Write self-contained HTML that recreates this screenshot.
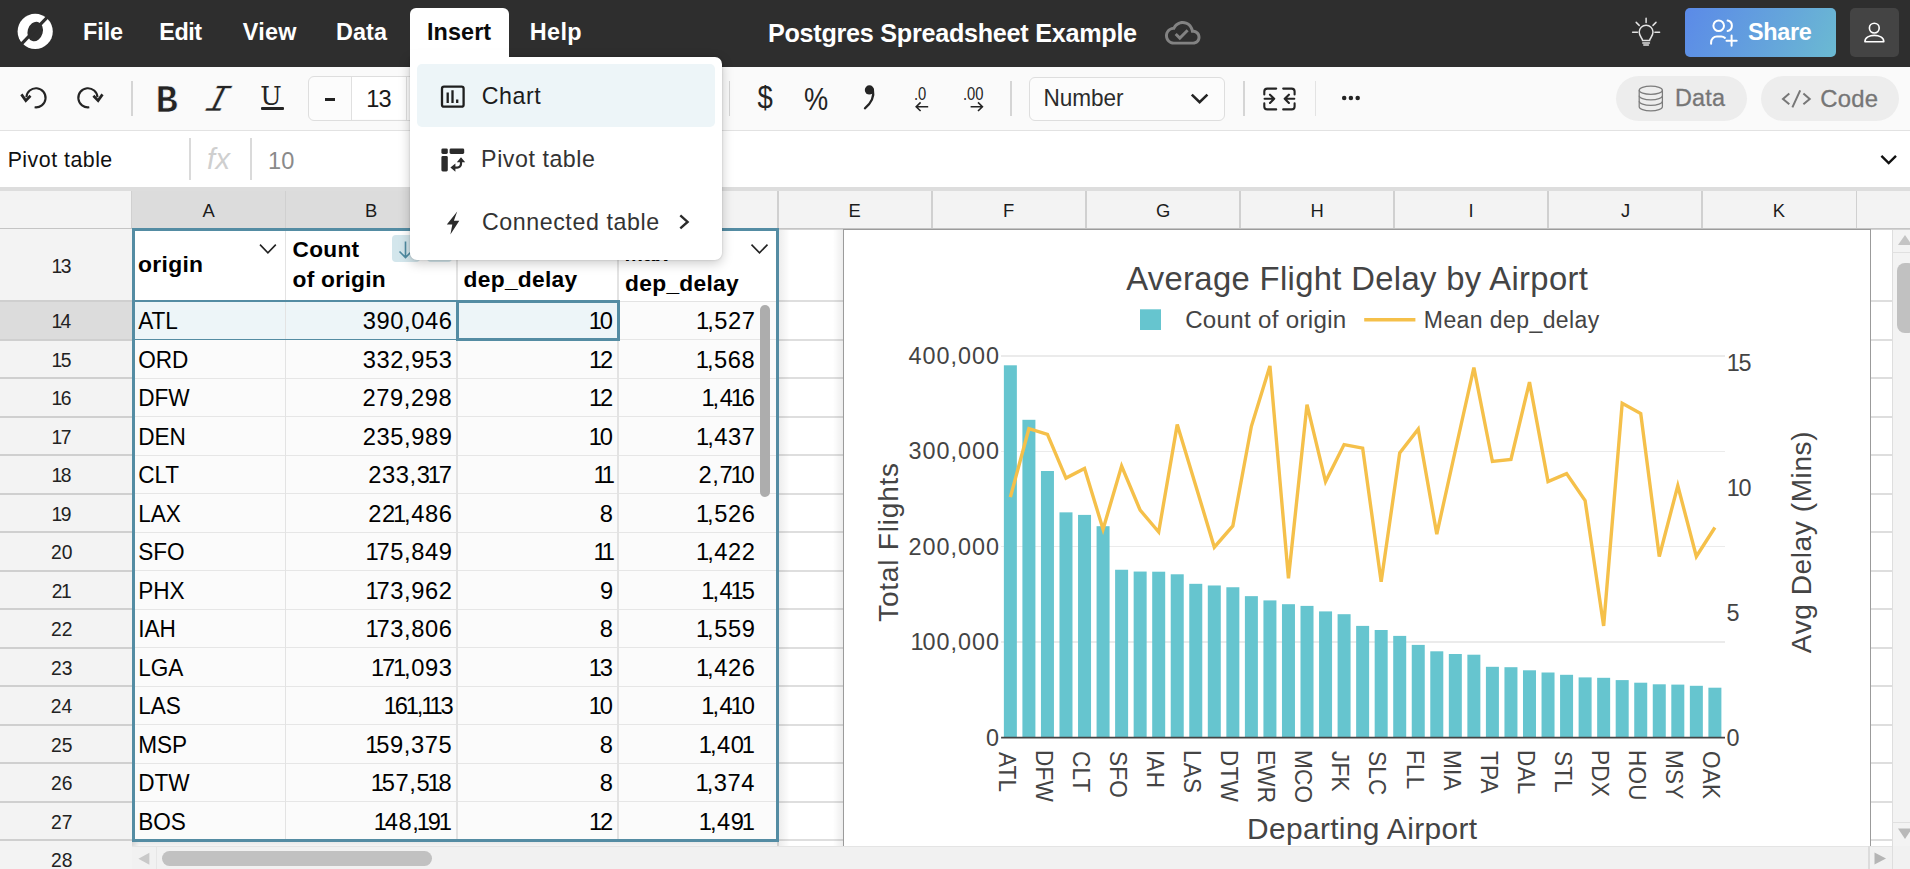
<!DOCTYPE html>
<html lang="en">
<head>
<meta charset="utf-8">
<title>Postgres Spreadsheet Example</title>
<style>
html,body{margin:0;padding:0;}
body{width:1910px;height:869px;overflow:hidden;position:relative;background:#fff;
 font-family:"Liberation Sans",Arial,sans-serif;color:#000;-webkit-font-smoothing:antialiased;}
div,span,svg{position:absolute;box-sizing:border-box;}
.t{line-height:1;white-space:pre;}
.t i{font-style:normal;}
svg{overflow:visible;}
#grid{left:0;top:187px;width:1910px;height:682px;overflow:hidden;background:#fff;}
#topbar{left:0;top:0;width:1910px;height:67px;background:#2e2e2e;}
#toolbar{left:0;top:67px;width:1910px;height:64px;background:#fafafa;border-bottom:1.5px solid #e2e2e2;}
#formula{left:0;top:131px;width:1910px;height:56px;background:#fff;}
.sep{width:1.5px;background:#d6d6d6;}
</style>
</head>
<body>
<div id="gridwrap" style="left:0;top:0;width:1910px;height:869px;">
<div style="left:0px;top:187px;width:1910px;height:682px;background:#fff;"></div>
<div style="left:131.5px;top:300.4px;width:1778.5px;height:1.8px;background:#dedede;"></div>
<div style="left:131.5px;top:338.89px;width:1778.5px;height:1.8px;background:#dedede;"></div>
<div style="left:131.5px;top:377.38px;width:1778.5px;height:1.8px;background:#dedede;"></div>
<div style="left:131.5px;top:415.87px;width:1778.5px;height:1.8px;background:#dedede;"></div>
<div style="left:131.5px;top:454.36px;width:1778.5px;height:1.8px;background:#dedede;"></div>
<div style="left:131.5px;top:492.85px;width:1778.5px;height:1.8px;background:#dedede;"></div>
<div style="left:131.5px;top:531.34px;width:1778.5px;height:1.8px;background:#dedede;"></div>
<div style="left:131.5px;top:569.83px;width:1778.5px;height:1.8px;background:#dedede;"></div>
<div style="left:131.5px;top:608.32px;width:1778.5px;height:1.8px;background:#dedede;"></div>
<div style="left:131.5px;top:646.81px;width:1778.5px;height:1.8px;background:#dedede;"></div>
<div style="left:131.5px;top:685.3px;width:1778.5px;height:1.8px;background:#dedede;"></div>
<div style="left:131.5px;top:723.79px;width:1778.5px;height:1.8px;background:#dedede;"></div>
<div style="left:131.5px;top:762.28px;width:1778.5px;height:1.8px;background:#dedede;"></div>
<div style="left:131.5px;top:800.77px;width:1778.5px;height:1.8px;background:#dedede;"></div>
<div style="left:131.5px;top:839.26px;width:1778.5px;height:1.8px;background:#dedede;"></div>
<div style="left:131.5px;top:877.75px;width:1778.5px;height:1.8px;background:#dedede;"></div>
<div style="left:777.1px;top:228.5px;width:1.8px;height:640.5px;background:#dedede;"></div>
<div style="left:931.1px;top:228.5px;width:1.8px;height:640.5px;background:#dedede;"></div>
<div style="left:1085.1px;top:228.5px;width:1.8px;height:640.5px;background:#dedede;"></div>
<div style="left:1239.1px;top:228.5px;width:1.8px;height:640.5px;background:#dedede;"></div>
<div style="left:1393.1px;top:228.5px;width:1.8px;height:640.5px;background:#dedede;"></div>
<div style="left:1547.1px;top:228.5px;width:1.8px;height:640.5px;background:#dedede;"></div>
<div style="left:1701.1px;top:228.5px;width:1.8px;height:640.5px;background:#dedede;"></div>
<div style="left:1855.8999999999999px;top:228.5px;width:1.8px;height:640.5px;background:#dedede;"></div>
<div style="left:0px;top:187px;width:1910px;height:4.2px;background:#dddddd;"></div>
<div style="left:0px;top:191.2px;width:1910px;height:37.3px;background:#f3f3f3;"></div>
<div style="left:131.5px;top:191.2px;width:486.5px;height:37.3px;background:#dcdcdc;"></div>
<div style="left:130.8px;top:191.2px;width:1.4px;height:37.3px;background:#d0d0d0;"></div>
<div style="left:285.1px;top:191.2px;width:1.4px;height:37.3px;background:#d0d0d0;"></div>
<div style="left:456.3px;top:191.2px;width:1.4px;height:37.3px;background:#d0d0d0;"></div>
<div style="left:617.3px;top:191.2px;width:1.4px;height:37.3px;background:#d0d0d0;"></div>
<div style="left:777.3px;top:191.2px;width:1.4px;height:37.3px;background:#d0d0d0;"></div>
<div style="left:931.3px;top:191.2px;width:1.4px;height:37.3px;background:#d0d0d0;"></div>
<div style="left:1085.3px;top:191.2px;width:1.4px;height:37.3px;background:#d0d0d0;"></div>
<div style="left:1239.3px;top:191.2px;width:1.4px;height:37.3px;background:#d0d0d0;"></div>
<div style="left:1393.3px;top:191.2px;width:1.4px;height:37.3px;background:#d0d0d0;"></div>
<div style="left:1547.3px;top:191.2px;width:1.4px;height:37.3px;background:#d0d0d0;"></div>
<div style="left:1701.3px;top:191.2px;width:1.4px;height:37.3px;background:#d0d0d0;"></div>
<div style="left:1856.1px;top:191.2px;width:1.4px;height:37.3px;background:#d0d0d0;"></div>
<span class="t" style="left:202.53px;top:202.32px;font-size:18.4px;color:#1c1c1c;">A</span>
<span class="t" style="left:365.02px;top:202.32px;font-size:18.4px;color:#1c1c1c;">B</span>
<span class="t" style="left:530.81px;top:202.32px;font-size:18.4px;color:#1c1c1c;">C</span>
<span class="t" style="left:691.06px;top:202.32px;font-size:18.4px;color:#1c1c1c;">D</span>
<span class="t" style="left:848.50px;top:202.32px;font-size:18.4px;color:#1c1c1c;">E</span>
<span class="t" style="left:1003.00px;top:202.32px;font-size:18.4px;color:#1c1c1c;">F</span>
<span class="t" style="left:1156.12px;top:202.32px;font-size:18.4px;color:#1c1c1c;">G</span>
<span class="t" style="left:1310.38px;top:202.32px;font-size:18.4px;color:#1c1c1c;">H</span>
<span class="t" style="left:1468.50px;top:202.32px;font-size:18.4px;color:#1c1c1c;">I</span>
<span class="t" style="left:1620.94px;top:202.32px;font-size:18.4px;color:#1c1c1c;">J</span>
<span class="t" style="left:1772.65px;top:202.32px;font-size:18.4px;color:#1c1c1c;">K</span>
<div style="left:0px;top:227.5px;width:1910px;height:2.5px;background:linear-gradient(#bdbdbd,#d9d9d9);"></div>
<div style="left:0px;top:228.5px;width:131.5px;height:640.5px;background:#f3f3f3;"></div>
<div style="left:0px;top:301.3px;width:131.5px;height:38.49px;background:#dcdcdc;"></div>
<div style="left:0px;top:300.3px;width:131.5px;height:2.0px;background:#cfcfcf;"></div>
<div style="left:0px;top:338.79px;width:131.5px;height:2.0px;background:#cfcfcf;"></div>
<div style="left:0px;top:377.28px;width:131.5px;height:2.0px;background:#cfcfcf;"></div>
<div style="left:0px;top:415.77px;width:131.5px;height:2.0px;background:#cfcfcf;"></div>
<div style="left:0px;top:454.26px;width:131.5px;height:2.0px;background:#cfcfcf;"></div>
<div style="left:0px;top:492.75px;width:131.5px;height:2.0px;background:#cfcfcf;"></div>
<div style="left:0px;top:531.24px;width:131.5px;height:2.0px;background:#cfcfcf;"></div>
<div style="left:0px;top:569.73px;width:131.5px;height:2.0px;background:#cfcfcf;"></div>
<div style="left:0px;top:608.22px;width:131.5px;height:2.0px;background:#cfcfcf;"></div>
<div style="left:0px;top:646.71px;width:131.5px;height:2.0px;background:#cfcfcf;"></div>
<div style="left:0px;top:685.2px;width:131.5px;height:2.0px;background:#cfcfcf;"></div>
<div style="left:0px;top:723.69px;width:131.5px;height:2.0px;background:#cfcfcf;"></div>
<div style="left:0px;top:762.18px;width:131.5px;height:2.0px;background:#cfcfcf;"></div>
<div style="left:0px;top:800.67px;width:131.5px;height:2.0px;background:#cfcfcf;"></div>
<div style="left:0px;top:839.16px;width:131.5px;height:2.0px;background:#cfcfcf;"></div>
<div style="left:0px;top:877.65px;width:131.5px;height:2.0px;background:#cfcfcf;"></div>
<span class="t" style="left:53.14px;top:256.86px;font-size:19.3px;color:#222;"><i style="margin:0 -1.6px">1</i>3</span>
<span class="t" style="left:53.01px;top:312.46px;font-size:19.3px;color:#222;"><i style="margin:0 -1.6px">1</i>4</span>
<span class="t" style="left:53.14px;top:350.95px;font-size:19.3px;color:#222;"><i style="margin:0 -1.6px">1</i>5</span>
<span class="t" style="left:53.14px;top:389.44px;font-size:19.3px;color:#222;"><i style="margin:0 -1.6px">1</i>6</span>
<span class="t" style="left:53.20px;top:427.93px;font-size:19.3px;color:#222;"><i style="margin:0 -1.6px">1</i>7</span>
<span class="t" style="left:53.14px;top:466.42px;font-size:19.3px;color:#222;"><i style="margin:0 -1.6px">1</i>8</span>
<span class="t" style="left:53.20px;top:504.91px;font-size:19.3px;color:#222;"><i style="margin:0 -1.6px">1</i>9</span>
<span class="t" style="left:50.92px;top:543.40px;font-size:19.3px;color:#222;">20</span>
<span class="t" style="left:51.85px;top:581.89px;font-size:19.3px;color:#222;">2<i style="margin:0 -1.6px">1</i></span>
<span class="t" style="left:51.05px;top:620.38px;font-size:19.3px;color:#222;">22</span>
<span class="t" style="left:50.99px;top:658.87px;font-size:19.3px;color:#222;">23</span>
<span class="t" style="left:50.86px;top:697.36px;font-size:19.3px;color:#222;">24</span>
<span class="t" style="left:50.99px;top:735.85px;font-size:19.3px;color:#222;">25</span>
<span class="t" style="left:50.99px;top:774.34px;font-size:19.3px;color:#222;">26</span>
<span class="t" style="left:51.05px;top:812.83px;font-size:19.3px;color:#222;">27</span>
<span class="t" style="left:50.99px;top:851.32px;font-size:19.3px;color:#222;">28</span>
<div style="left:131.5px;top:228.5px;width:7.5px;height:640.5px;background:linear-gradient(90deg,rgba(0,0,0,.10),rgba(0,0,0,0));"></div>
<div style="left:131.5px;top:228px;width:647.7px;height:613.5px;background:#fbfbfb;"></div>
<div style="left:131.5px;top:228px;width:647.7px;height:73.3px;background:#fff;"></div>
<div style="left:131.5px;top:301.3px;width:487.5px;height:38.49px;background:#edf5f8;"></div>
<div style="left:131.5px;top:339.19px;width:647.7px;height:1.2px;background:#e6e6e6;"></div>
<div style="left:131.5px;top:377.68px;width:647.7px;height:1.2px;background:#e6e6e6;"></div>
<div style="left:131.5px;top:416.17px;width:647.7px;height:1.2px;background:#e6e6e6;"></div>
<div style="left:131.5px;top:454.66px;width:647.7px;height:1.2px;background:#e6e6e6;"></div>
<div style="left:131.5px;top:493.15px;width:647.7px;height:1.2px;background:#e6e6e6;"></div>
<div style="left:131.5px;top:531.64px;width:647.7px;height:1.2px;background:#e6e6e6;"></div>
<div style="left:131.5px;top:570.13px;width:647.7px;height:1.2px;background:#e6e6e6;"></div>
<div style="left:131.5px;top:608.62px;width:647.7px;height:1.2px;background:#e6e6e6;"></div>
<div style="left:131.5px;top:647.11px;width:647.7px;height:1.2px;background:#e6e6e6;"></div>
<div style="left:131.5px;top:685.6px;width:647.7px;height:1.2px;background:#e6e6e6;"></div>
<div style="left:131.5px;top:724.09px;width:647.7px;height:1.2px;background:#e6e6e6;"></div>
<div style="left:131.5px;top:762.58px;width:647.7px;height:1.2px;background:#e6e6e6;"></div>
<div style="left:131.5px;top:801.07px;width:647.7px;height:1.2px;background:#e6e6e6;"></div>
<div style="left:285.2px;top:228px;width:1.2px;height:613.5px;background:#e3e3e3;"></div>
<div style="left:456.4px;top:228px;width:1.2px;height:613.5px;background:#e3e3e3;"></div>
<div style="left:617.4px;top:228px;width:1.2px;height:613.5px;background:#e3e3e3;"></div>
<div style="left:131.5px;top:300.7px;width:647.7px;height:1.2px;background:#e3e3e3;"></div>
<div style="left:131.5px;top:300.1px;width:487.5px;height:1.8px;background:#548ca3;"></div>
<div style="left:131.5px;top:338.79px;width:487.5px;height:1.6px;background:#548ca3;"></div>
<div style="left:456px;top:299.9px;width:163.9px;height:40.8px;border:3.5px solid #548ca3;"></div>
<div style="left:131.5px;top:228px;width:647.7px;height:613.5px;border:3.2px solid #548ca3;"></div>
<div style="left:760.3px;top:304.9px;width:9.5px;height:192.1px;background:#adadad;border-radius:5px;"></div>
<div style="left:779.2px;top:229.5px;width:10.8px;height:616.5px;background:linear-gradient(90deg,rgba(0,0,0,.07),rgba(0,0,0,0));"></div>
<div style="left:833px;top:229.5px;width:10px;height:616.5px;background:linear-gradient(270deg,rgba(0,0,0,.07),rgba(0,0,0,0));"></div>
<div style="left:131.5px;top:841.5px;width:647.7px;height:5.0px;background:linear-gradient(180deg,rgba(0,0,0,.085),rgba(0,0,0,.03));"></div>
<span class="t" style="left:138.12px;top:252.62px;font-size:22.89px;letter-spacing:0.290px;font-weight:700;">origin</span>
<span class="t" style="left:292.52px;top:239.34px;font-size:22.64px;letter-spacing:0.294px;font-weight:700;">Count</span>
<span class="t" style="left:292.52px;top:267.64px;font-size:22.75px;letter-spacing:0.269px;font-weight:700;">of origin</span>
<span class="t" style="left:463.00px;top:239.62px;font-size:22.3px;font-weight:700;">Mean</span>
<span class="t" style="left:463.62px;top:267.63px;font-size:22.76px;letter-spacing:0.281px;font-weight:700;">dep_delay</span>
<span class="t" style="left:624.50px;top:243.22px;font-size:22.3px;font-weight:700;">Max</span>
<span class="t" style="left:625.12px;top:271.53px;font-size:22.76px;letter-spacing:0.281px;font-weight:700;">dep_delay</span>
<div style="left:392.2px;top:235px;width:27.8px;height:27.4px;background:#d3e6ec;border-radius:4px;"></div>
<div style="left:427px;top:235px;width:25px;height:27.4px;background:#d3e6ec;border-radius:4px;"></div>
<svg style="left:392px;top:235px;width:28px;height:28px" viewBox="0 0 28 28"><path d="M13.5 6.5V22.5M7.5 16.5L13.5 22.5L19.5 16.5" fill="none" stroke="#4f8ba1" stroke-width="1.6"/></svg>
<svg style="left:0;top:0;width:1px;height:1px"><path d="M260 244.6L267.9 252.8L275.8 244.6" fill="none" stroke="#222" stroke-width="1.6"/></svg>
<svg style="left:0;top:0;width:1px;height:1px"><path d="M751.5 244.6L759.5 252.8L767.5 244.6" fill="none" stroke="#222" stroke-width="1.6"/></svg>
<span class="t" style="left:138.30px;top:311.37px;font-size:22.6px;letter-spacing:-0.100px;transform:scaleY(1.05);transform-origin:0 84.65%;">ATL</span>
<span class="t" style="left:362.65px;top:310.44px;font-size:23.7px;letter-spacing:0.600px;">390,046</span>
<span class="t" style="left:591.40px;top:310.44px;font-size:23.7px;letter-spacing:0.600px;"><i style="margin:0 -2.75px">1</i>0</span>
<span class="t" style="left:698.85px;top:310.44px;font-size:23.7px;letter-spacing:0.600px;"><i style="margin:0 -2.75px">1</i>,527</span>
<span class="t" style="left:138.30px;top:349.86px;font-size:22.6px;letter-spacing:-0.100px;transform:scaleY(1.05);transform-origin:0 84.65%;">ORD</span>
<span class="t" style="left:362.65px;top:348.93px;font-size:23.7px;letter-spacing:0.600px;">332,953</span>
<span class="t" style="left:591.65px;top:348.93px;font-size:23.7px;letter-spacing:0.600px;"><i style="margin:0 -2.75px">1</i>2</span>
<span class="t" style="left:698.60px;top:348.93px;font-size:23.7px;letter-spacing:0.600px;"><i style="margin:0 -2.75px">1</i>,568</span>
<span class="t" style="left:138.30px;top:388.35px;font-size:22.6px;letter-spacing:-0.100px;transform:scaleY(1.05);transform-origin:0 84.65%;">DFW</span>
<span class="t" style="left:362.52px;top:387.42px;font-size:23.7px;letter-spacing:0.600px;">279,298</span>
<span class="t" style="left:591.65px;top:387.42px;font-size:23.7px;letter-spacing:0.600px;"><i style="margin:0 -2.75px">1</i>2</span>
<span class="t" style="left:704.23px;top:387.42px;font-size:23.7px;letter-spacing:0.600px;"><i style="margin:0 -2.75px">1</i>,4<i style="margin:0 -2.75px">1</i>6</span>
<span class="t" style="left:138.30px;top:426.84px;font-size:22.6px;letter-spacing:-0.100px;transform:scaleY(1.05);transform-origin:0 84.65%;">DEN</span>
<span class="t" style="left:362.65px;top:425.91px;font-size:23.7px;letter-spacing:0.600px;">235,989</span>
<span class="t" style="left:591.40px;top:425.91px;font-size:23.7px;letter-spacing:0.600px;"><i style="margin:0 -2.75px">1</i>0</span>
<span class="t" style="left:698.85px;top:425.91px;font-size:23.7px;letter-spacing:0.600px;"><i style="margin:0 -2.75px">1</i>,437</span>
<span class="t" style="left:138.30px;top:465.33px;font-size:22.6px;letter-spacing:-0.100px;transform:scaleY(1.05);transform-origin:0 84.65%;">CLT</span>
<span class="t" style="left:368.27px;top:464.40px;font-size:23.7px;letter-spacing:0.600px;">233,3<i style="margin:0 -2.75px">1</i>7</span>
<span class="t" style="left:596.15px;top:464.40px;font-size:23.7px;letter-spacing:0.600px;"><i style="margin:0 -2.75px">1</i><i style="margin:0 -2.75px">1</i></span>
<span class="t" style="left:698.60px;top:464.40px;font-size:23.7px;letter-spacing:0.600px;">2,7<i style="margin:0 -2.75px">1</i>0</span>
<span class="t" style="left:138.30px;top:503.82px;font-size:22.6px;letter-spacing:-0.100px;transform:scaleY(1.05);transform-origin:0 84.65%;">LAX</span>
<span class="t" style="left:368.15px;top:502.89px;font-size:23.7px;letter-spacing:0.600px;">22<i style="margin:0 -2.75px">1</i>,486</span>
<span class="t" style="left:599.75px;top:502.89px;font-size:23.7px;letter-spacing:0.600px;">8</span>
<span class="t" style="left:698.73px;top:502.89px;font-size:23.7px;letter-spacing:0.600px;"><i style="margin:0 -2.75px">1</i>,526</span>
<span class="t" style="left:138.30px;top:542.31px;font-size:22.6px;letter-spacing:-0.100px;transform:scaleY(1.05);transform-origin:0 84.65%;">SFO</span>
<span class="t" style="left:368.15px;top:541.38px;font-size:23.7px;letter-spacing:0.600px;"><i style="margin:0 -2.75px">1</i>75,849</span>
<span class="t" style="left:596.15px;top:541.38px;font-size:23.7px;letter-spacing:0.600px;"><i style="margin:0 -2.75px">1</i><i style="margin:0 -2.75px">1</i></span>
<span class="t" style="left:698.85px;top:541.38px;font-size:23.7px;letter-spacing:0.600px;"><i style="margin:0 -2.75px">1</i>,422</span>
<span class="t" style="left:138.30px;top:580.80px;font-size:22.6px;letter-spacing:-0.100px;transform:scaleY(1.05);transform-origin:0 84.65%;">PHX</span>
<span class="t" style="left:368.27px;top:579.87px;font-size:23.7px;letter-spacing:0.600px;"><i style="margin:0 -2.75px">1</i>73,962</span>
<span class="t" style="left:599.88px;top:579.87px;font-size:23.7px;letter-spacing:0.600px;">9</span>
<span class="t" style="left:704.10px;top:579.87px;font-size:23.7px;letter-spacing:0.600px;"><i style="margin:0 -2.75px">1</i>,4<i style="margin:0 -2.75px">1</i>5</span>
<span class="t" style="left:138.30px;top:619.29px;font-size:22.6px;letter-spacing:-0.100px;transform:scaleY(1.05);transform-origin:0 84.65%;">IAH</span>
<span class="t" style="left:368.15px;top:618.36px;font-size:23.7px;letter-spacing:0.600px;"><i style="margin:0 -2.75px">1</i>73,806</span>
<span class="t" style="left:599.75px;top:618.36px;font-size:23.7px;letter-spacing:0.600px;">8</span>
<span class="t" style="left:698.73px;top:618.36px;font-size:23.7px;letter-spacing:0.600px;"><i style="margin:0 -2.75px">1</i>,559</span>
<span class="t" style="left:138.30px;top:657.78px;font-size:22.6px;letter-spacing:-0.100px;transform:scaleY(1.05);transform-origin:0 84.65%;">LGA</span>
<span class="t" style="left:373.65px;top:656.85px;font-size:23.7px;letter-spacing:0.600px;"><i style="margin:0 -2.75px">1</i>7<i style="margin:0 -2.75px">1</i>,093</span>
<span class="t" style="left:591.52px;top:656.85px;font-size:23.7px;letter-spacing:0.600px;"><i style="margin:0 -2.75px">1</i>3</span>
<span class="t" style="left:698.73px;top:656.85px;font-size:23.7px;letter-spacing:0.600px;"><i style="margin:0 -2.75px">1</i>,426</span>
<span class="t" style="left:138.30px;top:696.27px;font-size:22.6px;letter-spacing:-0.100px;transform:scaleY(1.05);transform-origin:0 84.65%;">LAS</span>
<span class="t" style="left:386.40px;top:695.34px;font-size:23.7px;letter-spacing:0.600px;"><i style="margin:0 -2.75px">1</i>6<i style="margin:0 -2.75px">1</i>,<i style="margin:0 -2.75px">1</i><i style="margin:0 -2.75px">1</i>3</span>
<span class="t" style="left:591.40px;top:695.34px;font-size:23.7px;letter-spacing:0.600px;"><i style="margin:0 -2.75px">1</i>0</span>
<span class="t" style="left:704.10px;top:695.34px;font-size:23.7px;letter-spacing:0.600px;"><i style="margin:0 -2.75px">1</i>,4<i style="margin:0 -2.75px">1</i>0</span>
<span class="t" style="left:138.30px;top:734.76px;font-size:22.6px;letter-spacing:-0.100px;transform:scaleY(1.05);transform-origin:0 84.65%;">MSP</span>
<span class="t" style="left:368.02px;top:733.83px;font-size:23.7px;letter-spacing:0.600px;"><i style="margin:0 -2.75px">1</i>59,375</span>
<span class="t" style="left:599.75px;top:733.83px;font-size:23.7px;letter-spacing:0.600px;">8</span>
<span class="t" style="left:701.60px;top:733.83px;font-size:23.7px;letter-spacing:0.600px;"><i style="margin:0 -2.75px">1</i>,40<i style="margin:0 -2.75px">1</i></span>
<span class="t" style="left:138.30px;top:773.25px;font-size:22.6px;letter-spacing:-0.100px;transform:scaleY(1.05);transform-origin:0 84.65%;">DTW</span>
<span class="t" style="left:373.52px;top:772.32px;font-size:23.7px;letter-spacing:0.600px;"><i style="margin:0 -2.75px">1</i>57,5<i style="margin:0 -2.75px">1</i>8</span>
<span class="t" style="left:599.75px;top:772.32px;font-size:23.7px;letter-spacing:0.600px;">8</span>
<span class="t" style="left:698.35px;top:772.32px;font-size:23.7px;letter-spacing:0.600px;"><i style="margin:0 -2.75px">1</i>,374</span>
<span class="t" style="left:138.30px;top:811.74px;font-size:22.6px;letter-spacing:-0.100px;transform:scaleY(1.05);transform-origin:0 84.65%;">BOS</span>
<span class="t" style="left:376.52px;top:810.81px;font-size:23.7px;letter-spacing:0.600px;"><i style="margin:0 -2.75px">1</i>48,<i style="margin:0 -2.75px">1</i>9<i style="margin:0 -2.75px">1</i></span>
<span class="t" style="left:591.65px;top:810.81px;font-size:23.7px;letter-spacing:0.600px;"><i style="margin:0 -2.75px">1</i>2</span>
<span class="t" style="left:701.60px;top:810.81px;font-size:23.7px;letter-spacing:0.600px;"><i style="margin:0 -2.75px">1</i>,49<i style="margin:0 -2.75px">1</i></span>
<div style="left:843px;top:229px;width:1027.6px;height:640px;background:#fff;border:1.6px solid #9b9b9b;border-bottom:none;"></div>
<div style="left:1001.1px;top:641.4px;width:723.86px;height:1.5px;background:#ebebeb;"></div>
<div style="left:1001.1px;top:545.95px;width:723.86px;height:1.5px;background:#ebebeb;"></div>
<div style="left:1001.1px;top:450.5px;width:723.86px;height:1.5px;background:#ebebeb;"></div>
<div style="left:1001.1px;top:355.05px;width:723.86px;height:1.5px;background:#ebebeb;"></div>
<svg id="chart" style="left:0;top:0;width:1910px;height:869px" viewBox="0 0 1910 869">
<g fill="#66c5cf">
<rect x="1003.87" y="365.30" width="13" height="372.30"/>
<rect x="1022.41" y="419.80" width="13" height="317.80"/>
<rect x="1040.95" y="471.01" width="13" height="266.59"/>
<rect x="1059.49" y="512.35" width="13" height="225.25"/>
<rect x="1078.03" y="514.90" width="13" height="222.70"/>
<rect x="1096.57" y="526.19" width="13" height="211.41"/>
<rect x="1115.11" y="569.75" width="13" height="167.85"/>
<rect x="1133.65" y="571.55" width="13" height="166.05"/>
<rect x="1152.19" y="571.70" width="13" height="165.90"/>
<rect x="1170.73" y="574.29" width="13" height="163.31"/>
<rect x="1189.27" y="583.82" width="13" height="153.78"/>
<rect x="1207.81" y="585.48" width="13" height="152.12"/>
<rect x="1226.35" y="587.25" width="13" height="150.35"/>
<rect x="1244.89" y="596.15" width="13" height="141.45"/>
<rect x="1263.43" y="600.40" width="13" height="137.20"/>
<rect x="1281.97" y="604.20" width="13" height="133.40"/>
<rect x="1300.51" y="605.90" width="13" height="131.70"/>
<rect x="1319.05" y="611.40" width="13" height="126.20"/>
<rect x="1337.59" y="614.20" width="13" height="123.40"/>
<rect x="1356.13" y="625.90" width="13" height="111.70"/>
<rect x="1374.67" y="630.00" width="13" height="107.60"/>
<rect x="1393.21" y="635.90" width="13" height="101.70"/>
<rect x="1411.75" y="644.90" width="13" height="92.70"/>
<rect x="1430.29" y="651.30" width="13" height="86.30"/>
<rect x="1448.83" y="654.00" width="13" height="83.60"/>
<rect x="1467.37" y="654.70" width="13" height="82.90"/>
<rect x="1485.91" y="666.80" width="13" height="70.80"/>
<rect x="1504.45" y="667.20" width="13" height="70.40"/>
<rect x="1522.99" y="670.30" width="13" height="67.30"/>
<rect x="1541.53" y="672.50" width="13" height="65.10"/>
<rect x="1560.07" y="674.80" width="13" height="62.80"/>
<rect x="1578.61" y="677.40" width="13" height="60.20"/>
<rect x="1597.15" y="677.80" width="13" height="59.80"/>
<rect x="1615.69" y="680.10" width="13" height="57.50"/>
<rect x="1634.23" y="682.70" width="13" height="54.90"/>
<rect x="1652.77" y="684.30" width="13" height="53.30"/>
<rect x="1671.31" y="684.60" width="13" height="53.00"/>
<rect x="1689.85" y="685.80" width="13" height="51.80"/>
<rect x="1708.39" y="687.70" width="13" height="49.90"/>
</g>
<path d="M1001.1 737.6H1725.0" stroke="#444" stroke-width="1.7" fill="none"/>
<polyline points="1010.37,497.1 1028.91,428.7 1047.45,434.3 1065.99,478.1 1084.53,468.5 1103.07,529.2 1121.61,466.0 1140.15,510.2 1158.69,532.0 1177.23,424.6 1195.77,485.7 1214.31,547.2 1232.85,525.9 1251.39,426.3 1269.93,365.9 1288.47,578.3 1307.01,404.6 1325.55,481.6 1344.09,444.6 1362.63,448.1 1381.17,581.7 1399.71,452.9 1418.25,429.1 1436.79,534.1 1455.33,450.5 1473.87,367.6 1492.41,461.5 1510.95,459.5 1529.49,382.1 1548.03,481.6 1566.57,473.6 1585.11,500.6 1603.65,625.9 1622.19,403.2 1640.73,413.5 1659.27,556.5 1677.81,485.7 1696.35,556.5 1714.89,527.5" fill="none" stroke="#f5c04a" stroke-width="3.4" stroke-linejoin="miter" stroke-miterlimit="4"/>
<rect x="1140" y="309.3" width="21" height="20.7" fill="#66c5cf"/>
<path d="M1364.2 319.8H1415.4" stroke="#f5c04a" stroke-width="3.4"/>
</svg>
<span class="t" style="left:1126.17px;top:263.23px;font-size:32.8px;letter-spacing:0.340px;color:#444;transform:scaleY(1.002);transform-origin:0 84.65%;">Average Flight Delay by Airport</span>
<span class="t" style="left:1185.15px;top:308.17px;font-size:24.13px;letter-spacing:0.298px;color:#444;transform:scaleY(1.001);transform-origin:0 84.65%;">Count of origin</span>
<span class="t" style="left:1423.83px;top:309.13px;font-size:23px;letter-spacing:0.412px;color:#444;transform:scaleY(1.05);transform-origin:0 84.65%;">Mean dep_delay</span>
<span class="t" style="left:985.88px;top:726.79px;font-size:23.4px;letter-spacing:1.000px;color:#444;transform:scaleY(1.0);transform-origin:0 84.65%;">0</span>
<span class="t" style="left:912.78px;top:631.34px;font-size:23.4px;letter-spacing:1.000px;color:#444;transform:scaleY(1.0);transform-origin:0 84.65%;"><i style="margin:0 -2.2px">1</i>00,000</span>
<span class="t" style="left:908.38px;top:535.89px;font-size:23.4px;letter-spacing:1.000px;color:#444;transform:scaleY(1.0);transform-origin:0 84.65%;">200,000</span>
<span class="t" style="left:908.38px;top:440.44px;font-size:23.4px;letter-spacing:1.000px;color:#444;transform:scaleY(1.0);transform-origin:0 84.65%;">300,000</span>
<span class="t" style="left:908.38px;top:344.99px;font-size:23.4px;letter-spacing:1.000px;color:#444;transform:scaleY(1.0);transform-origin:0 84.65%;">400,000</span>
<span class="t" style="left:1726.62px;top:727.39px;font-size:23.4px;letter-spacing:0.800px;color:#444;transform:scaleY(1.0);transform-origin:0 84.65%;">0</span>
<span class="t" style="left:1726.50px;top:602.39px;font-size:23.4px;letter-spacing:0.800px;color:#444;transform:scaleY(1.0);transform-origin:0 84.65%;">5</span>
<span class="t" style="left:1729.05px;top:477.39px;font-size:23.4px;letter-spacing:0.800px;color:#444;transform:scaleY(1.0);transform-origin:0 84.65%;"><i style="margin:0 -2.2px">1</i>0</span>
<span class="t" style="left:1729.05px;top:352.39px;font-size:23.4px;letter-spacing:0.800px;color:#444;transform:scaleY(1.0);transform-origin:0 84.65%;"><i style="margin:0 -2.2px">1</i>5</span>
<span class="t" style="left:994.67px;top:751.80px;font-size:22.6px;color:#444;transform-origin:0 0;transform:rotate(90deg) translateY(-100%) scaleY(1.04);letter-spacing:0.2px">ATL</span>
<span class="t" style="left:1031.75px;top:749.92px;font-size:22.6px;color:#444;transform-origin:0 0;transform:rotate(90deg) translateY(-100%) scaleY(1.04);letter-spacing:0.2px">DFW</span>
<span class="t" style="left:1068.83px;top:750.67px;font-size:22.6px;color:#444;transform-origin:0 0;transform:rotate(90deg) translateY(-100%) scaleY(1.04);letter-spacing:0.2px">CLT</span>
<span class="t" style="left:1105.91px;top:750.80px;font-size:22.6px;color:#444;transform-origin:0 0;transform:rotate(90deg) translateY(-100%) scaleY(1.04);letter-spacing:0.2px">SFO</span>
<span class="t" style="left:1142.99px;top:749.67px;font-size:22.6px;color:#444;transform-origin:0 0;transform:rotate(90deg) translateY(-100%) scaleY(1.04);letter-spacing:0.2px">IAH</span>
<span class="t" style="left:1180.07px;top:749.92px;font-size:22.6px;color:#444;transform-origin:0 0;transform:rotate(90deg) translateY(-100%) scaleY(1.04);letter-spacing:0.2px">LAS</span>
<span class="t" style="left:1217.15px;top:749.92px;font-size:22.6px;color:#444;transform-origin:0 0;transform:rotate(90deg) translateY(-100%) scaleY(1.04);letter-spacing:0.2px">DTW</span>
<span class="t" style="left:1254.23px;top:749.92px;font-size:22.6px;color:#444;transform-origin:0 0;transform:rotate(90deg) translateY(-100%) scaleY(1.04);letter-spacing:0.2px">EWR</span>
<span class="t" style="left:1291.31px;top:749.92px;font-size:22.6px;color:#444;transform-origin:0 0;transform:rotate(90deg) translateY(-100%) scaleY(1.04);letter-spacing:0.2px">MCO</span>
<span class="t" style="left:1328.39px;top:751.42px;font-size:22.6px;color:#444;transform-origin:0 0;transform:rotate(90deg) translateY(-100%) scaleY(1.04);letter-spacing:0.2px">JFK</span>
<span class="t" style="left:1365.47px;top:750.80px;font-size:22.6px;color:#444;transform-origin:0 0;transform:rotate(90deg) translateY(-100%) scaleY(1.04);letter-spacing:0.2px">SLC</span>
<span class="t" style="left:1402.55px;top:749.92px;font-size:22.6px;color:#444;transform-origin:0 0;transform:rotate(90deg) translateY(-100%) scaleY(1.04);letter-spacing:0.2px">FLL</span>
<span class="t" style="left:1439.63px;top:749.92px;font-size:22.6px;color:#444;transform-origin:0 0;transform:rotate(90deg) translateY(-100%) scaleY(1.04);letter-spacing:0.2px">MIA</span>
<span class="t" style="left:1476.71px;top:751.30px;font-size:22.6px;color:#444;transform-origin:0 0;transform:rotate(90deg) translateY(-100%) scaleY(1.04);letter-spacing:0.2px">TPA</span>
<span class="t" style="left:1513.79px;top:749.92px;font-size:22.6px;color:#444;transform-origin:0 0;transform:rotate(90deg) translateY(-100%) scaleY(1.04);letter-spacing:0.2px">DAL</span>
<span class="t" style="left:1550.87px;top:750.80px;font-size:22.6px;color:#444;transform-origin:0 0;transform:rotate(90deg) translateY(-100%) scaleY(1.04);letter-spacing:0.2px">STL</span>
<span class="t" style="left:1587.95px;top:749.92px;font-size:22.6px;color:#444;transform-origin:0 0;transform:rotate(90deg) translateY(-100%) scaleY(1.04);letter-spacing:0.2px">PDX</span>
<span class="t" style="left:1625.03px;top:749.92px;font-size:22.6px;color:#444;transform-origin:0 0;transform:rotate(90deg) translateY(-100%) scaleY(1.04);letter-spacing:0.2px">HOU</span>
<span class="t" style="left:1662.11px;top:749.92px;font-size:22.6px;color:#444;transform-origin:0 0;transform:rotate(90deg) translateY(-100%) scaleY(1.04);letter-spacing:0.2px">MSY</span>
<span class="t" style="left:1699.19px;top:750.80px;font-size:22.6px;color:#444;transform-origin:0 0;transform:rotate(90deg) translateY(-100%) scaleY(1.04);letter-spacing:0.2px">OAK</span>
<span class="t" style="left:889.00px;top:541.70px;font-size:28px;color:#444;letter-spacing:0.8px;transform:translate(-50%,-50%) rotate(-90deg) scaleY(1.02);">Total Flights</span>
<span class="t" style="left:1802.30px;top:541.70px;font-size:28px;color:#444;letter-spacing:0.6px;transform:translate(-50%,-50%) rotate(-90deg) scaleY(1.02);">Avg Delay (Mins)</span>
<span class="t" style="left:1247.00px;top:813.52px;font-size:29.87px;letter-spacing:0.375px;color:#444;transform:scaleY(1.0);transform-origin:0 84.65%;">Departing Airport</span>
<div style="left:131.5px;top:846px;width:1778.5px;height:23px;background:#f1f1f1;border-top:1px solid #e4e4e4;"></div>
<div style="left:1868.2px;top:846px;width:1.4px;height:23px;background:#dcdcdc;"></div>
<div style="left:156.3px;top:847px;width:1.2px;height:22px;background:#e6e6e6;"></div>
<div style="left:162px;top:851.3px;width:270px;height:15.0px;background:#c1c1c1;border-radius:8px;"></div>
<svg style="left:0;top:0;width:1px;height:1px"><path d="M138.4 858.8L149.4 852.8V864.8Z" fill="#c9c9c9"/><path d="M1886 858.5L1874.5 852.5V864.5Z" fill="#b5b5b5"/></svg>
<div style="left:1892px;top:229.5px;width:18px;height:616.5px;background:#f3f3f3;border-left:1.5px solid #dedede;"></div>
<div style="left:1892px;top:252px;width:18px;height:1.4px;background:#e0e0e0;"></div>
<div style="left:1892px;top:821.5px;width:18px;height:1.5px;background:#e0e0e0;"></div>
<div style="left:1896.5px;top:262.5px;width:19.5px;height:70.5px;background:#c1c1c1;border-radius:8px;"></div>
<svg style="left:0;top:0;width:1px;height:1px"><path d="M1898 245L1905 235L1912 245Z" fill="#c4c4c4"/><path d="M1898 828.5L1905 839L1912 828.5Z" fill="#b9b9b9"/></svg>
<div style="left:1892px;top:846px;width:18px;height:23px;background:#f1f1f1;border-left:1.5px solid #dedede;"></div>
</div>
<div id="topbar">
<svg id="logo" style="left:17px;top:13px;width:36px;height:37px" viewBox="17 13 36 37">
<circle cx="35.2" cy="31.4" r="17.6" fill="#fff"/>
<ellipse cx="35.2" cy="31.5" rx="7.6" ry="10" transform="rotate(16 35.2 31.5)" fill="#2e2e2e"/>
<path d="M47.6 16.9L21.6 43.8" stroke="#2e2e2e" stroke-width="3.1" fill="none"/>
</svg>
<div style="left:410px;top:8px;width:99.2px;height:59px;background:#fff;border-radius:6px 6px 0 0;"></div>
<span class="t" style="left:83.10px;top:20.89px;font-size:23.4px;letter-spacing:-0.100px;font-weight:700;color:#fff;transform:scaleY(1.01);transform-origin:0 84.65%;">File</span>
<span class="t" style="left:159.30px;top:20.89px;font-size:23.4px;letter-spacing:-0.458px;font-weight:700;color:#fff;transform:scaleY(1.01);transform-origin:0 84.65%;">Edit</span>
<span class="t" style="left:242.78px;top:20.89px;font-size:23.4px;letter-spacing:0.283px;font-weight:700;color:#fff;transform:scaleY(1.01);transform-origin:0 84.65%;">View</span>
<span class="t" style="left:336.00px;top:20.89px;font-size:23.4px;letter-spacing:0.083px;font-weight:700;color:#fff;transform:scaleY(1.01);transform-origin:0 84.65%;">Data</span>
<span class="t" style="left:427.00px;top:20.89px;font-size:23.4px;letter-spacing:0.085px;font-weight:700;color:#0a0a0a;transform:scaleY(1.01);transform-origin:0 84.65%;">Insert</span>
<span class="t" style="left:529.70px;top:20.89px;font-size:23.4px;letter-spacing:0.417px;font-weight:700;color:#fff;transform:scaleY(1.01);transform-origin:0 84.65%;">Help</span>
<span class="t" style="left:767.98px;top:20.57px;font-size:25.2px;letter-spacing:-0.275px;font-weight:700;color:#fff;transform:scaleY(1.04);transform-origin:0 84.65%;">Postgres Spreadsheet Example</span>
<svg style="left:1165.4px;top:14.5px;width:35.5px;height:35.5px" viewBox="0 0 24 24"><path fill="#828282" d="M19.35 10.04C18.67 6.59 15.64 4 12 4 9.11 4 6.6 5.64 5.35 8.04 2.34 8.36 0 10.91 0 14c0 3.31 2.69 6 6 6h13c2.76 0 5-2.24 5-5 0-2.64-2.05-4.78-4.65-4.96zM19 18H6c-2.21 0-4-1.79-4-4 0-2.05 1.53-3.76 3.56-3.97l1.07-.11.5-.95C8.08 7.14 9.94 6 12 6c2.62 0 4.88 1.86 5.39 4.43l.3 1.5 1.53.11c1.56.1 2.78 1.41 2.78 2.96 0 1.65-1.35 3-3 3zm-9-3.82l-2.09-2.09L6.5 13.5 10 17l6.01-6.01-1.41-1.41z"/></svg>
<svg style="left:0;top:0;width:1px;height:1px"><g fill="none" stroke="#e2e2e2" stroke-width="1.5" stroke-linecap="round">
<path d="M1646.1 18.3V22.6M1632.6 32.2H1637.4M1654.9 32.2H1659.6M1636.2 22.4L1639.2 25.4M1656 22.4L1653 25.4"/>
<path d="M1642.6 40.6C1642.6 38.2 1639.2 36.6 1639.2 32.1A6.9 6.9 0 0 1 1653 32.1C1653 36.6 1649.6 38.2 1649.6 40.6Z"/>
<path d="M1642.8 43H1649.4M1643.8 45.1H1648.4"/></g></svg>
<div style="left:1685px;top:7.9px;width:151px;height:49.1px;background:linear-gradient(115deg,#5b8ae8 0%,#64a3dc 55%,#6bbad2 100%);border-radius:5px;"></div>
<svg style="left:0;top:0;width:1px;height:1px"><g fill="none" stroke="#fff" stroke-width="2" stroke-linecap="round">
<circle cx="1718.7" cy="25.8" r="5.3"/>
<path d="M1711.1 43.8V42.4A5.8 5.8 0 0 1 1716.9 36.6H1721.2A5.8 5.8 0 0 1 1724.9 37.9"/>
<path d="M1727.6 20.6A5.3 5.3 0 0 1 1727.6 31"/>
<path d="M1731.6 35.6V45.8M1726.5 40.7H1736.7"/></g></svg>
<span class="t" style="left:1748.05px;top:20.89px;font-size:23.4px;letter-spacing:-0.325px;font-weight:700;color:#fff;transform:scaleY(1.01);transform-origin:0 84.65%;">Share</span>
<div style="left:1850px;top:7.9px;width:49px;height:49.1px;background:#444;border-radius:5px;"></div>
<svg style="left:0;top:0;width:1px;height:1px"><g fill="none" stroke="#fff" stroke-width="1.6" stroke-linejoin="round">
<circle cx="1874.3" cy="28.1" r="4.9"/>
<path d="M1864.9 41.7C1864.9 33.2 1883.8 33.2 1883.8 41.7Z"/></g></svg>
</div>
<div id="toolbar" style="top:67px;height:64.3px"></div>
<div id="tools" style="left:0;top:0;width:1910px;height:131px">
<svg style="left:0;top:0;width:1px;height:1px"><g fill="none" stroke="#242424" stroke-width="2.1">
<path d="M26.4 97.2A9.6 9.6 0 1 1 34.6 107.3"/>
<path d="M21.4 94.4L25.8 100.6L30.5 95.8" stroke-width="2.7"/>
<path d="M97.5 97.2A9.6 9.6 0 1 0 89.3 107.3"/>
<path d="M102.5 94.4L98.1 100.6L93.4 95.8" stroke-width="2.7"/>
</g></svg>
<div style="left:131.05px;top:81.2px;width:1.7px;height:34.4px;background:#d5d5d5;"></div>
<span class="t" style="left:155.6px;top:83.6px;font-size:37.5px;font-weight:bold;-webkit-text-stroke:0.7px #fafafa;font-family:'Liberation Mono',monospace;color:#242424;transform:scale(1.0,1.05);transform-origin:0 50%">B</span>
<span class="t" style="left:204.4px;top:82.3px;font-size:38.5px;font-family:'Liberation Mono',monospace;color:#242424;-webkit-text-stroke:0.5px #fafafa;transform:skewX(-26deg);transform-origin:50% 60%">I</span>
<span class="t" style="left:260.3px;top:84.1px;font-size:25.5px;font-family:'DejaVu Serif','Liberation Serif',serif;color:#242424;transform:scale(1.0,1.0);transform-origin:0 0">U</span>
<div style="left:261px;top:107.1px;width:23px;height:2.5px;background:#242424;border-radius:1px;"></div>
<div style="left:308.1px;top:76.0px;width:161.9px;height:44.6px;background:#fcfcfc;border:1.3px solid #dedede;border-radius:6px;"></div>
<div style="left:351.4px;top:77.3px;width:54.9px;height:42.0px;background:#fff;"></div>
<div style="left:350.6px;top:77px;width:1.3px;height:43.2px;background:#e0e0e0;"></div>
<div style="left:405.9px;top:77px;width:1.3px;height:43.2px;background:#e0e0e0;"></div>
<div style="left:325px;top:98px;width:9.9px;height:2.5px;background:#222;"></div>
<span class="t" style="left:367.15px;top:88.02px;font-size:23.6px;letter-spacing:0.200px;color:#1a1a1a;"><i style="margin:0 -1.0px">1</i>3</span>
<div style="left:728.65px;top:81.2px;width:1.7px;height:34.4px;background:#d5d5d5;"></div>
<span class="t" style="left:757.42px;top:84.92px;font-size:27.5px;letter-spacing:-0.800px;color:#242424;transform:scaleY(1.13);transform-origin:0 84.65%;">$</span>
<span class="t" style="left:804.00px;top:86.98px;font-size:27.2px;letter-spacing:1.950px;color:#242424;transform:scaleY(1.18);transform-origin:0 84.65%;">%</span>
<svg style="left:0;top:0;width:1px;height:1px"><circle cx="869.4" cy="89.9" r="4.6" fill="#242424"/>
<path d="M872.9 89.5C874.6 97 870.5 103.6 864.9 108.4" fill="none" stroke="#242424" stroke-width="2.2" stroke-linecap="round"/></svg>
<span class="t" style="left:914px;top:84.6px;font-size:18.5px;color:#242424;transform:scale(.8,1);transform-origin:0 0">.0</span>
<span class="t" style="left:962.6px;top:84.6px;font-size:18.5px;color:#242424;transform:scale(.8,1);transform-origin:0 0">.00</span>
<svg style="left:0;top:0;width:1px;height:1px"><g fill="none" stroke="#242424" stroke-width="1.6">
<path d="M928.2 106.7H916.4M920.6 102.4L916.2 106.7L920.6 111"/>
<path d="M970.6 106.7H982.2M978 102.4L982.4 106.7L978 111"/></g></svg>
<div style="left:1010.15px;top:81.2px;width:1.7px;height:34.4px;background:#d5d5d5;"></div>
<div style="left:1029.4px;top:77px;width:195.4px;height:43.6px;background:#fcfcfc;border:1.3px solid #dedede;border-radius:6px;"></div>
<span class="t" style="left:1043.53px;top:88.07px;font-size:22.6px;letter-spacing:-0.045px;color:#2c2c2c;transform:scaleY(1.03);transform-origin:0 84.65%;">Number</span>
<svg style="left:0;top:0;width:1px;height:1px"><path d="M1191.8 94.6L1199.6 102.2L1207.4 94.6" fill="none" stroke="#242424" stroke-width="2.6"/></svg>
<div style="left:1243.05px;top:81.2px;width:1.7px;height:34.4px;background:#d5d5d5;"></div>
<svg style="left:0;top:0;width:1px;height:1px"><g fill="none" stroke="#242424" stroke-width="2.1" stroke-linecap="round" stroke-linejoin="round">
<path d="M1264.3 94.4V91.6A3 3 0 0 1 1267.3 88.6H1276.2M1283.2 88.6H1291.6A3 3 0 0 1 1294.6 91.6V94.4M1294.6 103.4V106.4A3 3 0 0 1 1291.6 109.4H1283.2M1276.2 109.4H1267.3A3 3 0 0 1 1264.3 106.4V103.4"/>
<path d="M1264.6 98.8H1273.8M1270 94.7L1274.2 98.8L1270 102.9M1294.3 98.8H1285.1M1288.9 94.7L1284.7 98.8L1288.9 102.9"/>
</g></svg>
<div style="left:1314.75px;top:81.2px;width:1.3px;height:34.4px;background:#e3e3e3;"></div>
<svg style="left:0;top:0;width:1px;height:1px"><g fill="#242424"><circle cx="1344.2" cy="97.9" r="2.25"/><circle cx="1350.9" cy="97.9" r="2.25"/><circle cx="1357.7" cy="97.9" r="2.25"/></g></svg>
<div style="left:1616px;top:75.9px;width:131px;height:44.7px;background:#ededed;border-radius:23px;"></div>
<div style="left:1760.8px;top:75.9px;width:138.2px;height:44.7px;background:#ededed;border-radius:23px;"></div>
<svg style="left:0;top:0;width:1px;height:1px"><g fill="none" stroke="#7c7c7c" stroke-width="1.25">
<ellipse cx="1650.8" cy="90.2" rx="11.6" ry="4.1"/>
<path d="M1639.2 90.2V106.8C1639.2 109 1644.4 110.9 1650.8 110.9S1662.4 109 1662.4 106.8V90.2"/>
<path d="M1639.2 95.8C1639.2 98 1644.4 99.9 1650.8 99.9S1662.4 98 1662.4 95.8M1639.2 101.3C1639.2 103.5 1644.4 105.4 1650.8 105.4S1662.4 103.5 1662.4 101.3"/></g>
<g fill="none" stroke="#777" stroke-width="2"><path d="M1789.3 93.6L1783 98.9L1789.3 104.2M1800.2 90.3L1792.4 107.4M1803.4 93.6L1809.7 98.9L1803.4 104.2"/></g></svg>
<span class="t" style="left:1674.92px;top:87.41px;font-size:23.38px;letter-spacing:0.233px;color:#767676;transform:scaleY(1.004);transform-origin:0 84.65%;-webkit-text-stroke:0.3px #767676;">Data</span>
<span class="t" style="left:1820.15px;top:86.99px;font-size:23.87px;letter-spacing:0.283px;color:#767676;transform:scaleY(1.0);transform-origin:0 84.65%;-webkit-text-stroke:0.3px #767676;">Code</span>
</div>
<div id="formula">
</div>
<span class="t" style="left:7.65px;top:149.92px;font-size:21.36px;letter-spacing:0.487px;color:#111;">Pivot table</span>
<div style="left:189px;top:138px;width:1.6px;height:41.6px;background:#dadada;"></div>
<div style="left:250px;top:138px;width:1.6px;height:41.6px;background:#dadada;"></div>
<span class="t" style="left:207.00px;top:145.15px;font-size:29.12px;letter-spacing:0.300px;font-style:italic;color:#cfcfcf;">fx</span>
<span class="t" style="left:268.05px;top:150.42px;font-size:23.6px;letter-spacing:0.075px;color:#8a8a8a;">10</span>
<svg style="left:0;top:0;width:1px;height:1px"><path d="M1881.4 155.8L1888.7 163L1896 155.8" fill="none" stroke="#111" stroke-width="2.4"/></svg>
<div id="menu" style="left:410px;top:57px;width:312px;height:203px;background:#fff;border-radius:0 7px 7px 7px;box-shadow:0 3px 12px rgba(0,0,0,.22),0 0 2px rgba(0,0,0,.18);"></div>
<div style="left:410px;top:50px;width:99.2px;height:16px;background:#fff;"></div>
<div style="left:417.3px;top:63.9px;width:297.5px;height:62.9px;background:#edf5f8;border-radius:5px;"></div>
<svg style="left:0;top:0;width:1px;height:1px">
<rect x="442" y="86.7" width="21.6" height="20" rx="2" fill="none" stroke="#1f1f1f" stroke-width="2.3"/>
<path d="M447.7 92.6V103.1M452.5 90.2V103.1M457.2 99.6V103.1" stroke="#1f1f1f" stroke-width="2.3" fill="none"/>
<g fill="#2b2b2b"><rect x="441.4" y="148.4" width="6.4" height="5.6" rx="1.4"/><rect x="449.6" y="148.4" width="14.6" height="5.6" rx="1.4"/>
<rect x="441.4" y="156" width="6.4" height="15.4" rx="1.4"/></g>
<g fill="none" stroke="#2b2b2b" stroke-width="2.2"><path d="M452.6 167.6H457.2A3.8 3.8 0 0 0 461 163.8V159.4"/></g><path d="M455.4 163.4V171.8L450.4 167.6ZM456.8 162.2H465.2L461 157.2Z" fill="#2b2b2b"/>
<path d="M457.2 211.4L446.8 224.6H452.3L450.4 234.4L459.3 220.8H453.9Z" fill="#2b2b2b"/>
<path d="M680.3 215.4L687.6 221.9L680.3 228.4" fill="none" stroke="#2b2b2b" stroke-width="2.4"/>
</svg>
<span class="t" style="left:481.77px;top:84.94px;font-size:23.22px;letter-spacing:0.550px;color:#1c1c1c;transform:scaleY(1.0);transform-origin:0 84.65%;">Chart</span>
<span class="t" style="left:481.12px;top:147.94px;font-size:23.22px;letter-spacing:0.537px;color:#333;transform:scaleY(1.0);transform-origin:0 84.65%;">Pivot table</span>
<span class="t" style="left:481.88px;top:210.74px;font-size:23.22px;letter-spacing:0.577px;color:#333;transform:scaleY(1.0);transform-origin:0 84.65%;">Connected table</span>
</body>
</html>
